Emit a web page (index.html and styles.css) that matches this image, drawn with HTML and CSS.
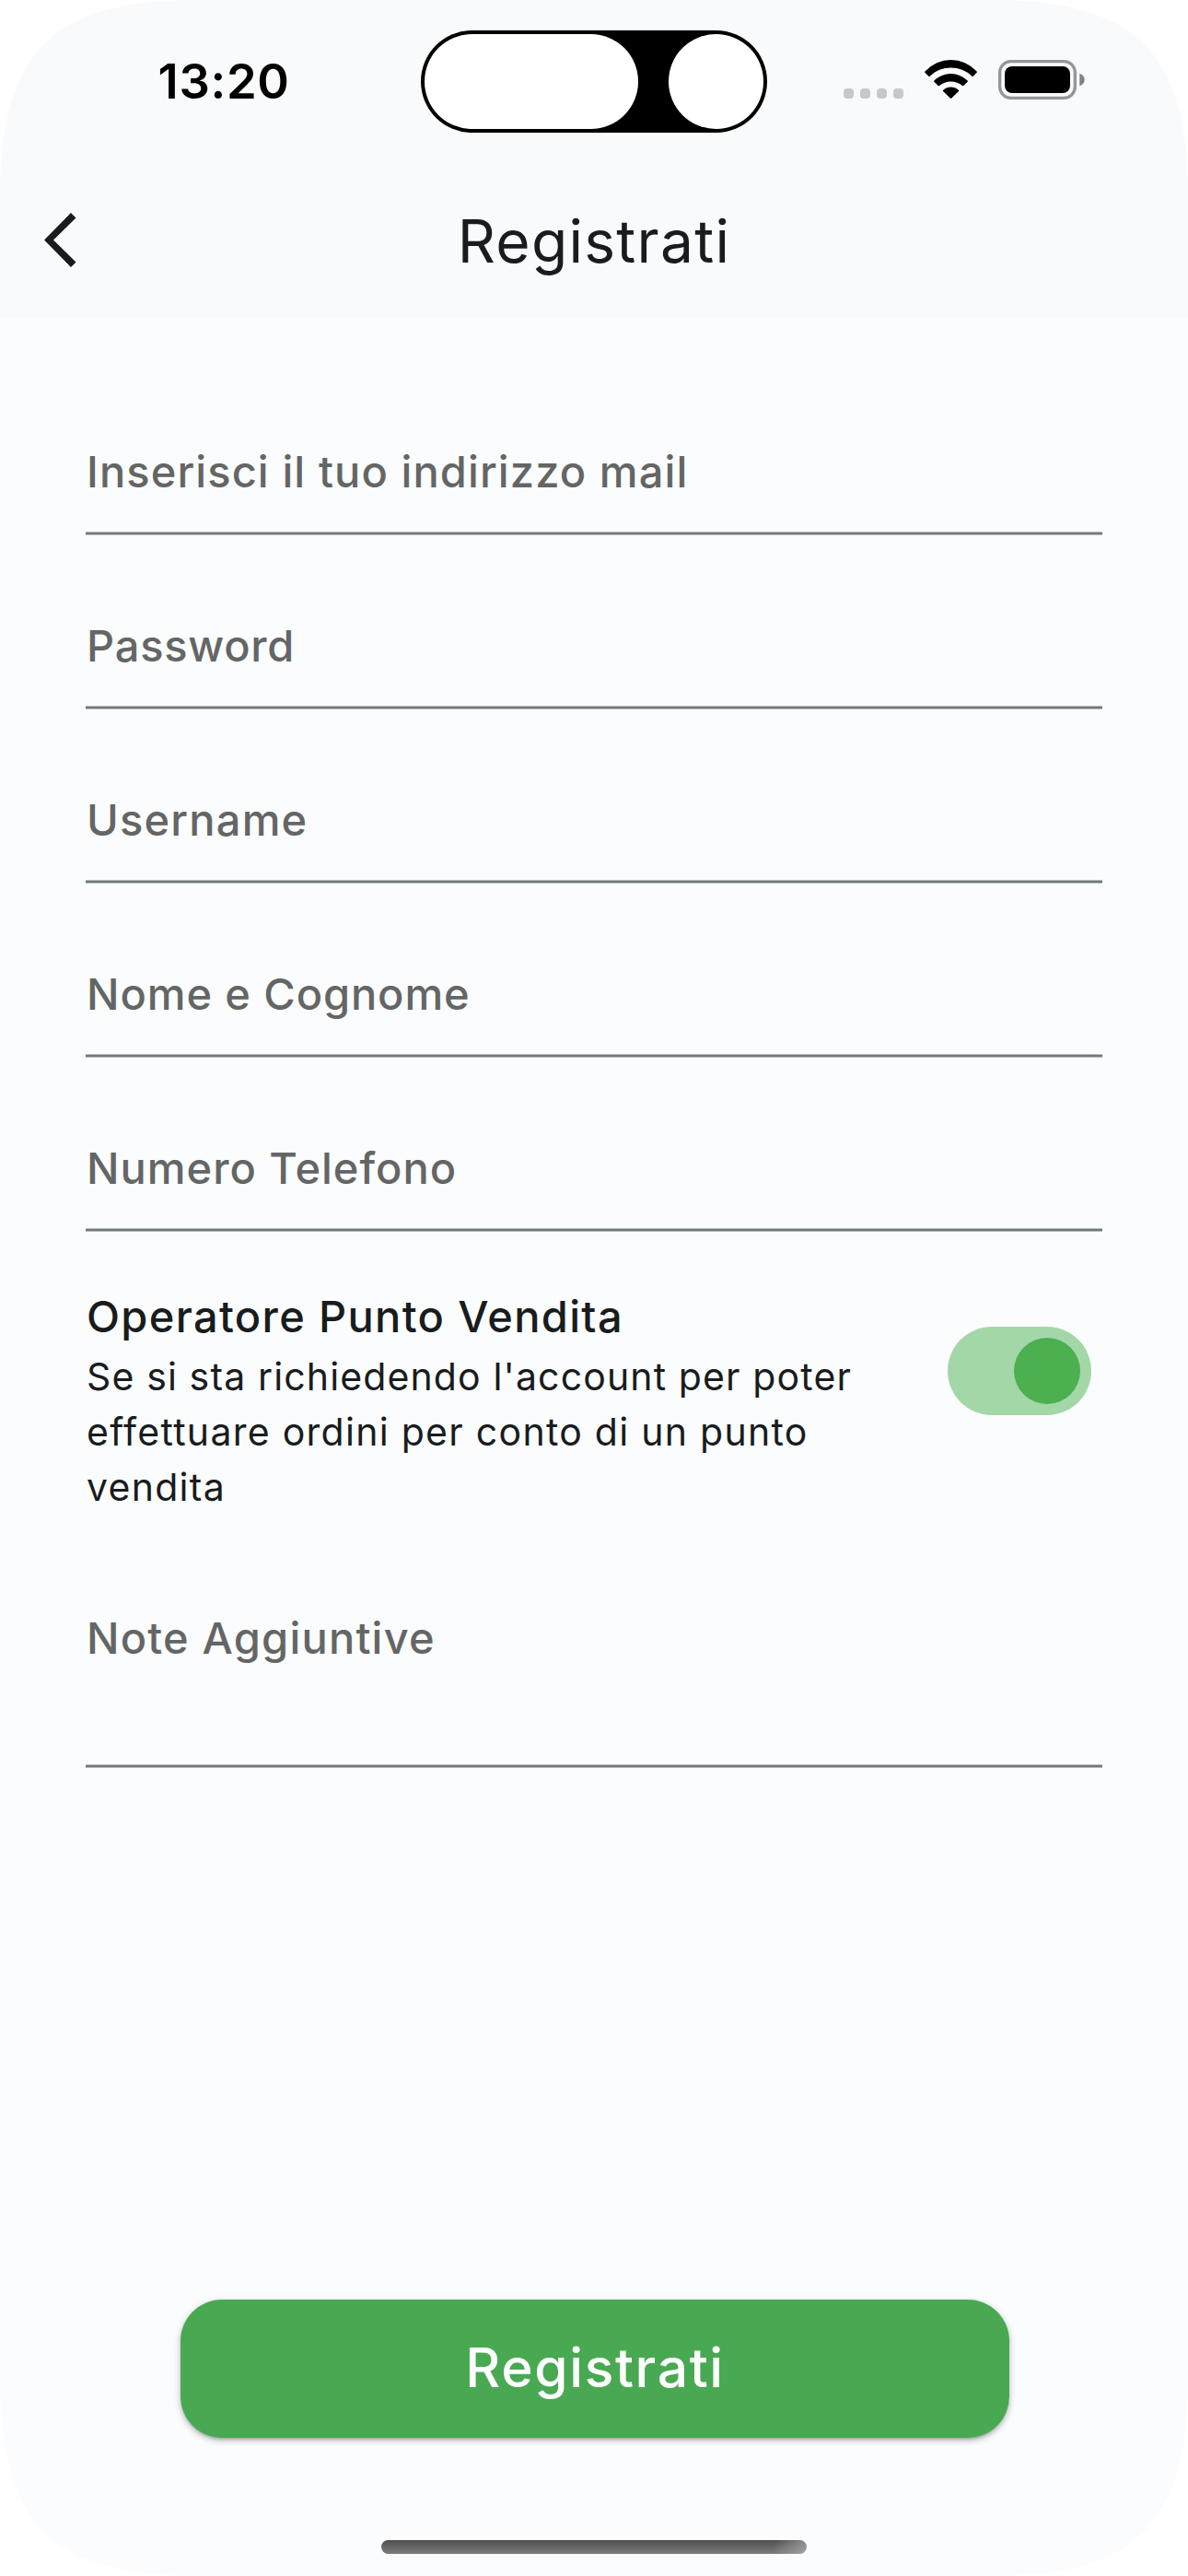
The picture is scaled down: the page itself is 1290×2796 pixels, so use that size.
FILE: index.html
```html
<!DOCTYPE html>
<html lang="it">
<head>
<meta charset="utf-8">
<title>Registrati</title>
<link rel="stylesheet" href="styles.css">
</head>
<body>
<div class="screen">
  <header class="header">
    <div class="status">
      <div class="time">13:20</div>
      <div class="island"><span class="island-pill"></span><span class="island-lens"></span></div>
      <div class="signal"><i></i><i></i><i></i><i></i></div>
      <svg class="wifi" viewBox="42 45 171 126">
        <path d="M44 82A113 113 0 0 1 211 82Q214 84 212 86L200 98Q198 100 196 98A99 99 0 0 0 59 98Q57 100 55 98L43 86Q41 84 44 82Z"/>
        <path d="M74 112A76 76 0 0 1 181 112Q184 114 182 116L169 129Q167 131 165 129A58 58 0 0 0 90 129Q88 131 86 129L73 116Q71 114 74 112Z"/>
        <path d="M103 143A36 36 0 0 1 152 143Q155 145 153 147L129 170Q127.500 171 126 170L102 147Q100 145 103 143Z"/>
      </svg>
      <svg class="battery" viewBox="282 45 282 129">
        <rect x="287" y="50" width="245" height="119" rx="36" fill="none" stroke="#949698" stroke-width="10"/>
        <rect x="303" y="66" width="213" height="87" rx="24"/>
        <path d="M547 89Q563 95 563 109.500T547 130Z" fill="#808284"/>
      </svg>
    </div>
    <div class="appbar">
      <svg class="back" viewBox="0 0 34.500 59"><path d="M29 0L34.500 5.500L10 29.500L34.500 53.500L29 59L0 29.500Z"/></svg>
      <h1 class="title">Registrati</h1>
    </div>
  </header>
  <main class="form">
    <div class="field"><label class="label email">Inserisci il tuo indirizzo mail</label></div>
    <div class="field"><label class="label password">Password</label></div>
    <div class="field"><label class="label username">Username</label></div>
    <div class="field"><label class="label name">Nome e Cognome</label></div>
    <div class="field"><label class="label">Numero Telefono</label></div>
    <div class="operator">
      <div class="operator-text">
        <div class="operator-title">Operatore Punto Vendita</div>
        <div class="operator-sub"><span class="tight">Se si sta richiedendo l'account per poter</span><br>effettuare ordini per conto di un punto<br>vendita</div>
      </div>
      <div class="switch"><span class="knob"></span></div>
    </div>
    <div class="field notes"><label class="label notes-label">Note Aggiuntive</label></div>
  </main>
  <footer class="footer">
    <button class="submit">Registrati</button>
    <div class="home"></div>
  </footer>
</div>
</body>
</html>
```
FILE: styles.css
```css
* { box-sizing: border-box; }

body {
  margin: 0;
  background: #fff;
  font-family: Inter, "Liberation Sans", sans-serif;
  color: #191c1d;
}

.screen {
  width: 1290px;
  height: 2796px;
  display: flex;
  flex-direction: column;
  background: #fbfcfe;
  clip-path: path("M0 215C0 56 56 0 215 0H1075C1234 0 1290 56 1290 215V2581C1290 2740 1234 2796 1075 2796H215C56 2796 0 2740 0 2581Z");
}

.header {
  height: 345px;
  flex: none;
  background: #f9fafc;
}

.status {
  height: 160px;
  display: flex;
  align-items: flex-start;
}

.time {
  width: 285px;
  margin: 56px 0 0 171.500px;
  font-size: 52.500px;
  line-height: 64px;
  font-weight: 600;
  letter-spacing: 0.690px;
  color: #000;
}

.island {
  width: 376px;
  height: 111px;
  margin-top: 33px;
  padding: 4px;
  display: flex;
  justify-content: space-between;
  border-radius: 56px;
  background: #000;
}

.island-pill,
.island-lens {
  height: 103px;
  border-radius: 52px;
  background: #fff;
}

.island-pill { width: 232px; }
.island-lens { width: 103px; }

.signal {
  display: flex;
  gap: 7px;
  margin: 96px 0 0 83.500px;
}

.signal i {
  width: 11px;
  height: 11px;
  border-radius: 4px;
  background: #c7c8ca;
}

.wifi {
  width: 57px;
  height: 42px;
  margin: 65px 0 0 23px;
}

.battery {
  width: 94px;
  height: 43px;
  margin: 65px 0 0 23px;
}

.appbar {
  height: 185px;
  display: grid;
  grid-template-columns: 200px 1fr 200px;
  align-items: start;
}

.back {
  width: 34.500px;
  height: 59px;
  margin: 71px 0 0 48px;
  fill: #191c1d;
}

.title {
  margin: 63px 0 0;
  text-align: center;
  font-size: 64px;
  line-height: 77px;
  font-weight: 400;
  letter-spacing: 1.300px;
}

.form {
  flex: 1;
  padding: 47px 93px 0;
}

.field {
  height: 189px;
  padding: 91px 0 0 1px;
  background: linear-gradient(#b5babd 1px, #707a7c 1px 3px, #b5babd 3px) bottom / 100% 4px no-repeat;
}

.label {
  display: block;
  font-size: 47px;
  line-height: 57px;
  font-weight: 450;
  letter-spacing: 1.000px;
  color: #646665;
}

.email { letter-spacing: 1.100px; }
.password { letter-spacing: 0.750px; }
.username { letter-spacing: 1.200px; }
.name { letter-spacing: 0.900px; }
.notes-label { letter-spacing: 1.200px; }

.operator {
  display: flex;
  justify-content: space-between;
  align-items: flex-start;
  padding: 63px 12px 0 1px;
}

.operator-title {
  font-size: 47px;
  line-height: 57px;
  font-weight: 500;
  letter-spacing: 1.330px;
}

.operator-sub {
  margin-top: 7px;
  font-size: 41px;
  line-height: 60px;
  letter-spacing: 1.280px;
  white-space: nowrap;
}

.tight { letter-spacing: 1.130px; }

.switch {
  width: 156px;
  height: 96px;
  margin-top: 40px;
  padding: 12px;
  display: flex;
  justify-content: flex-end;
  border-radius: 48px;
  background: #a3d7a8;
}

.knob {
  width: 72px;
  height: 72px;
  border-radius: 50%;
  background: #4caf50;
}

.notes {
  height: 170px;
  padding-top: 0;
  margin-top: 105px;
}

.footer {
  height: 300px;
  flex: none;
  display: flex;
  flex-direction: column;
  align-items: center;
}

.submit {
  width: 900px;
  height: 150px;
  margin-left: 2px;
  padding: 0 0 3px;
  border: 0;
  border-radius: 45px;
  background: #48a952;
  color: #fff;
  font-family: inherit;
  font-size: 58.700px;
  line-height: 71px;
  font-weight: 500;
  letter-spacing: 1.650px;
  box-shadow: 0 3px 3px -2px rgba(0, 0, 0, .2), 0 3px 6px rgba(0, 0, 0, .2), 0 2px 10px rgba(0, 0, 0, .1);
}

.home {
  width: 462px;
  height: 15px;
  margin-top: 111px;
  border-radius: 8px;
  background:
    linear-gradient(100deg, transparent 92%, rgba(190, 190, 190, .6) 100%),
    linear-gradient(#4f4f4f, #7c7c7c);
}
```
